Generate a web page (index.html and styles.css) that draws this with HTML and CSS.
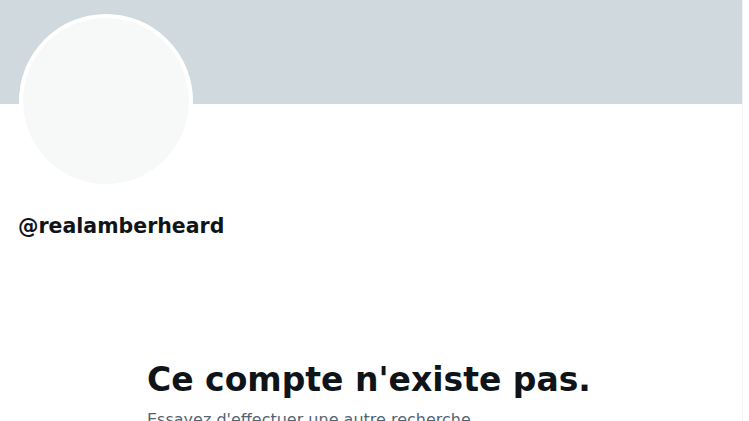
FILE: index.html
```html
<!DOCTYPE html>
<html lang="fr">
<head>
<meta charset="utf-8">
<link rel="stylesheet" href="styles.css">
</head>
<body>
<div class="page">
  <main class="column">
    <div class="banner"></div>
    <div class="profile">
      <div class="avatar"></div>
      <div class="handle">@realamberheard</div>
    </div>
    <section class="empty">
      <h1 class="title">Ce compte n'existe pas.</h1>
      <p class="sub">Essayez d'effectuer une autre recherche.</p>
    </section>
  </main>
  <div class="side"></div>
</div>
</body>
</html>
```
FILE: styles.css
```css
html, body { margin: 0; padding: 0; background: #fff; }
body { font-family: "DejaVu Sans", "Liberation Sans", sans-serif; color: #0f1419; overflow: hidden; height: 421px; }
.page { display: flex; width: 749px; height: 421px; }
.column { width: 742px; border-right: 1px solid #eff3f4; position: relative; }
.side { flex: 1; }
.banner { height: 104px; background: #cfd9de; }
.profile { position: relative; padding: 0 18px; height: 154px; }
.avatar {
  position: absolute; left: 19px; top: -90px;
  width: 166px; height: 166px; border-radius: 50%;
  background: #f7f9f9; border: 4px solid #fff;
}
.handle { padding-top: 110px; font-size: 20.5px; font-weight: 700; line-height: 24px; }
.empty { padding: 102px 0 0 147px; }
.title { margin: 0; font-size: 33px; font-weight: 700; line-height: 40px; }
.sub { margin: 10px 0 0; font-size: 16px; line-height: 20px; color: #536471; }
```
